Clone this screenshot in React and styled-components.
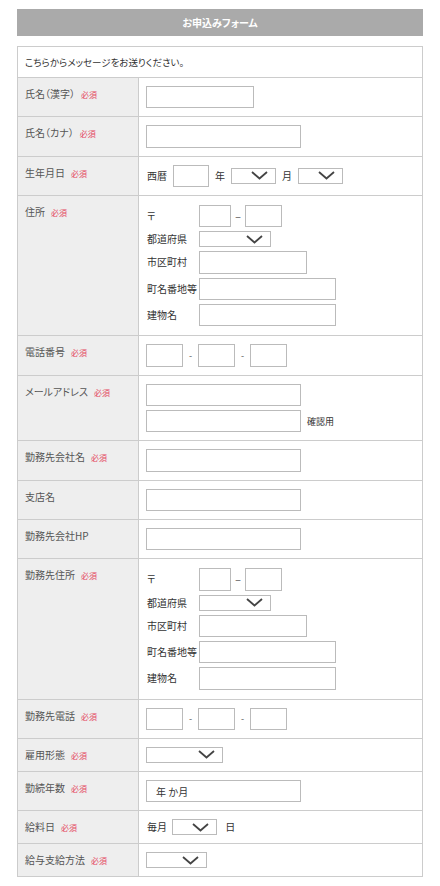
import React from 'react'
import styled, { createGlobalStyle } from 'styled-components'

const GlobalStyle = createGlobalStyle`
    body {
        margin: 0;
        background: #fff;
        font-family: "Noto Sans CJK JP", "Noto Sans", sans-serif;
        font-feature-settings: "palt";
        color: #333;
    }
`

const Chevron = () => (
    <svg width="17" height="9" viewBox="0 0 17 9">
        <path d="M1 1 L8.5 7.5 L16 1" fill="none" stroke="#444" strokeWidth="1.8" />
    </svg>
)

const Select = ({ width }) => (
    <SelectBox $width={width}>
        <Chevron />
    </SelectBox>
)

const Required = () => <Badge>必須</Badge>

const AddressBlock = () => (
    <AddressGrid>
        <SubLabel>〒</SubLabel>
        <Inline>
            <Input $width={32} />
            <ZipDash>−</ZipDash>
            <Input $width={37} />
        </Inline>
        <SubLabel>都道府県</SubLabel>
        <Select width={72} />
        <SubLabel>市区町村</SubLabel>
        <Input $width={108} />
        <SubLabel>町名番地等</SubLabel>
        <Input $width={137} />
        <SubLabel>建物名</SubLabel>
        <Input $width={137} />
    </AddressGrid>
)

const PhoneBlock = () => (
    <Inline>
        <Input $width={37} />
        <Dash>-</Dash>
        <Input $width={37} />
        <Dash>-</Dash>
        <Input $width={37} />
    </Inline>
)

const Row = ({ label, required, children }) => (
    <RowWrap>
        <LabelCell>
            {label}
            {required && <Required />}
        </LabelCell>
        <FieldCell>{children}</FieldCell>
    </RowWrap>
)

const App = () => {
    return (
        <Page>
            <GlobalStyle />
            <Header>お申込みフォーム</Header>
            <Table>
                <Message>こちらからメッセージをお送りください。</Message>

                <Row label="氏名（漢字）" required>
                    <Input $width={108} />
                </Row>
                <Row label="氏名（カナ）" required>
                    <Input $width={155} />
                </Row>
                <Row label="生年月日" required>
                    <Inline $gap={5.5}>
                        <Text>西暦</Text>
                        <Input $width={36} />
                        <Text>年</Text>
                        <Select width={45} />
                        <Text>月</Text>
                        <Select width={45} />
                    </Inline>
                </Row>
                <Row label="住所" required>
                    <AddressBlock />
                </Row>
                <Row label="電話番号" required>
                    <PhoneBlock />
                </Row>
                <Row label="メールアドレス" required>
                    <Stack>
                        <Input $width={155} />
                        <Inline $gap={6}>
                            <Input $width={155} />
                            <Note>確認用</Note>
                        </Inline>
                    </Stack>
                </Row>
                <Row label="勤務先会社名" required>
                    <Input $width={155} />
                </Row>
                <Row label="支店名">
                    <Input $width={155} />
                </Row>
                <Row label="勤務先会社HP">
                    <Input $width={155} />
                </Row>
                <Row label="勤務先住所" required>
                    <AddressBlock />
                </Row>
                <Row label="勤務先電話" required>
                    <PhoneBlock />
                </Row>
                <Row label="雇用形態" required>
                    <Select width={77} />
                </Row>
                <Row label="勤続年数" required>
                    <Input $width={155} $pad={9} readOnly defaultValue="年 か月" />
                </Row>
                <Row label="給料日" required>
                    <Inline $gap={5}>
                        <Text>毎月</Text>
                        <Select width={45} />
                        <Text>&nbsp;日</Text>
                    </Inline>
                </Row>
                <Row label="給与支給方法" required>
                    <Select width={61} />
                </Row>
            </Table>
        </Page>
    )
}

const Page = styled.div`
    width: 406px;
    margin: 9px auto 10px;
`

const Header = styled.h1`
    margin: 0 0 10px;
    height: 27px;
    background: #aaaaaa;
    color: #fff;
    font-size: 10px;
    font-weight: bold;
    line-height: 27px;
    text-align: center;
`

const Table = styled.section`
    border: 1px solid #cccccc;
    border-bottom: none;
`

const Message = styled.div`
    padding: 8px 7px;
    font-size: 9.5px;
    line-height: 14px;
    color: #333;
    border-bottom: 1px solid #cccccc;
`

const RowWrap = styled.div`
    display: grid;
    grid-template-columns: 121px 1fr;
    border-bottom: 1px solid #cccccc;
`

const LabelCell = styled.div`
    background: #eeeeee;
    border-right: 1px solid #cccccc;
    padding: 8px 7px;
    font-size: 10px;
    line-height: 15px;
    color: #555;
`

const Badge = styled.span`
    margin-left: 6px;
    font-size: 8px;
    color: #e4475f;
`

const FieldCell = styled.div`
    padding: 8px 7px;
    display: flex;
    align-items: center;
    font-size: 10px;
    color: #333;
`

const Input = styled.input`
    box-sizing: border-box;
    width: ${p => p.$width}px;
    height: 22.33px;
    margin: 0;
    padding: 0 ${p => p.$pad || 4}px;
    border: 1px solid #bbbbbb;
    border-radius: 0;
    background: #fff;
    font-family: inherit;
    font-size: 10px;
    color: #333;
    outline: none;
`

const SelectBox = styled.div`
    box-sizing: border-box;
    width: ${p => p.$width}px;
    height: 16px;
    border: 1px solid #bbbbbb;
    background: #fff;
    display: flex;
    align-items: center;
    justify-content: flex-end;
    padding-right: 7px;
`

const Inline = styled.div`
    display: flex;
    align-items: center;
    gap: ${p => p.$gap || 0}px;
`

const Stack = styled.div`
    display: flex;
    flex-direction: column;
    gap: 4px;
`

const Text = styled.span`
    font-size: 10px;
    line-height: 14px;
    color: #333;
    padding-left: 1px;
`

const Note = styled.span`
    font-size: 9px;
    color: #333;
`

const Dash = styled.span`
    width: 15px;
    text-align: center;
    font-size: 9px;
    color: #555;
`

const ZipDash = styled.span`
    width: 14px;
    text-align: center;
    font-size: 10px;
    color: #555;
`

const AddressGrid = styled.div`
    display: grid;
    grid-template-columns: 53px auto;
    justify-content: start;
    justify-items: start;
    align-items: center;
    row-gap: 4px;
    margin: 1px 0;
`

const SubLabel = styled.span`
    font-size: 10px;
    line-height: 14px;
    color: #333;
    padding-left: 1px;
`

export default App
